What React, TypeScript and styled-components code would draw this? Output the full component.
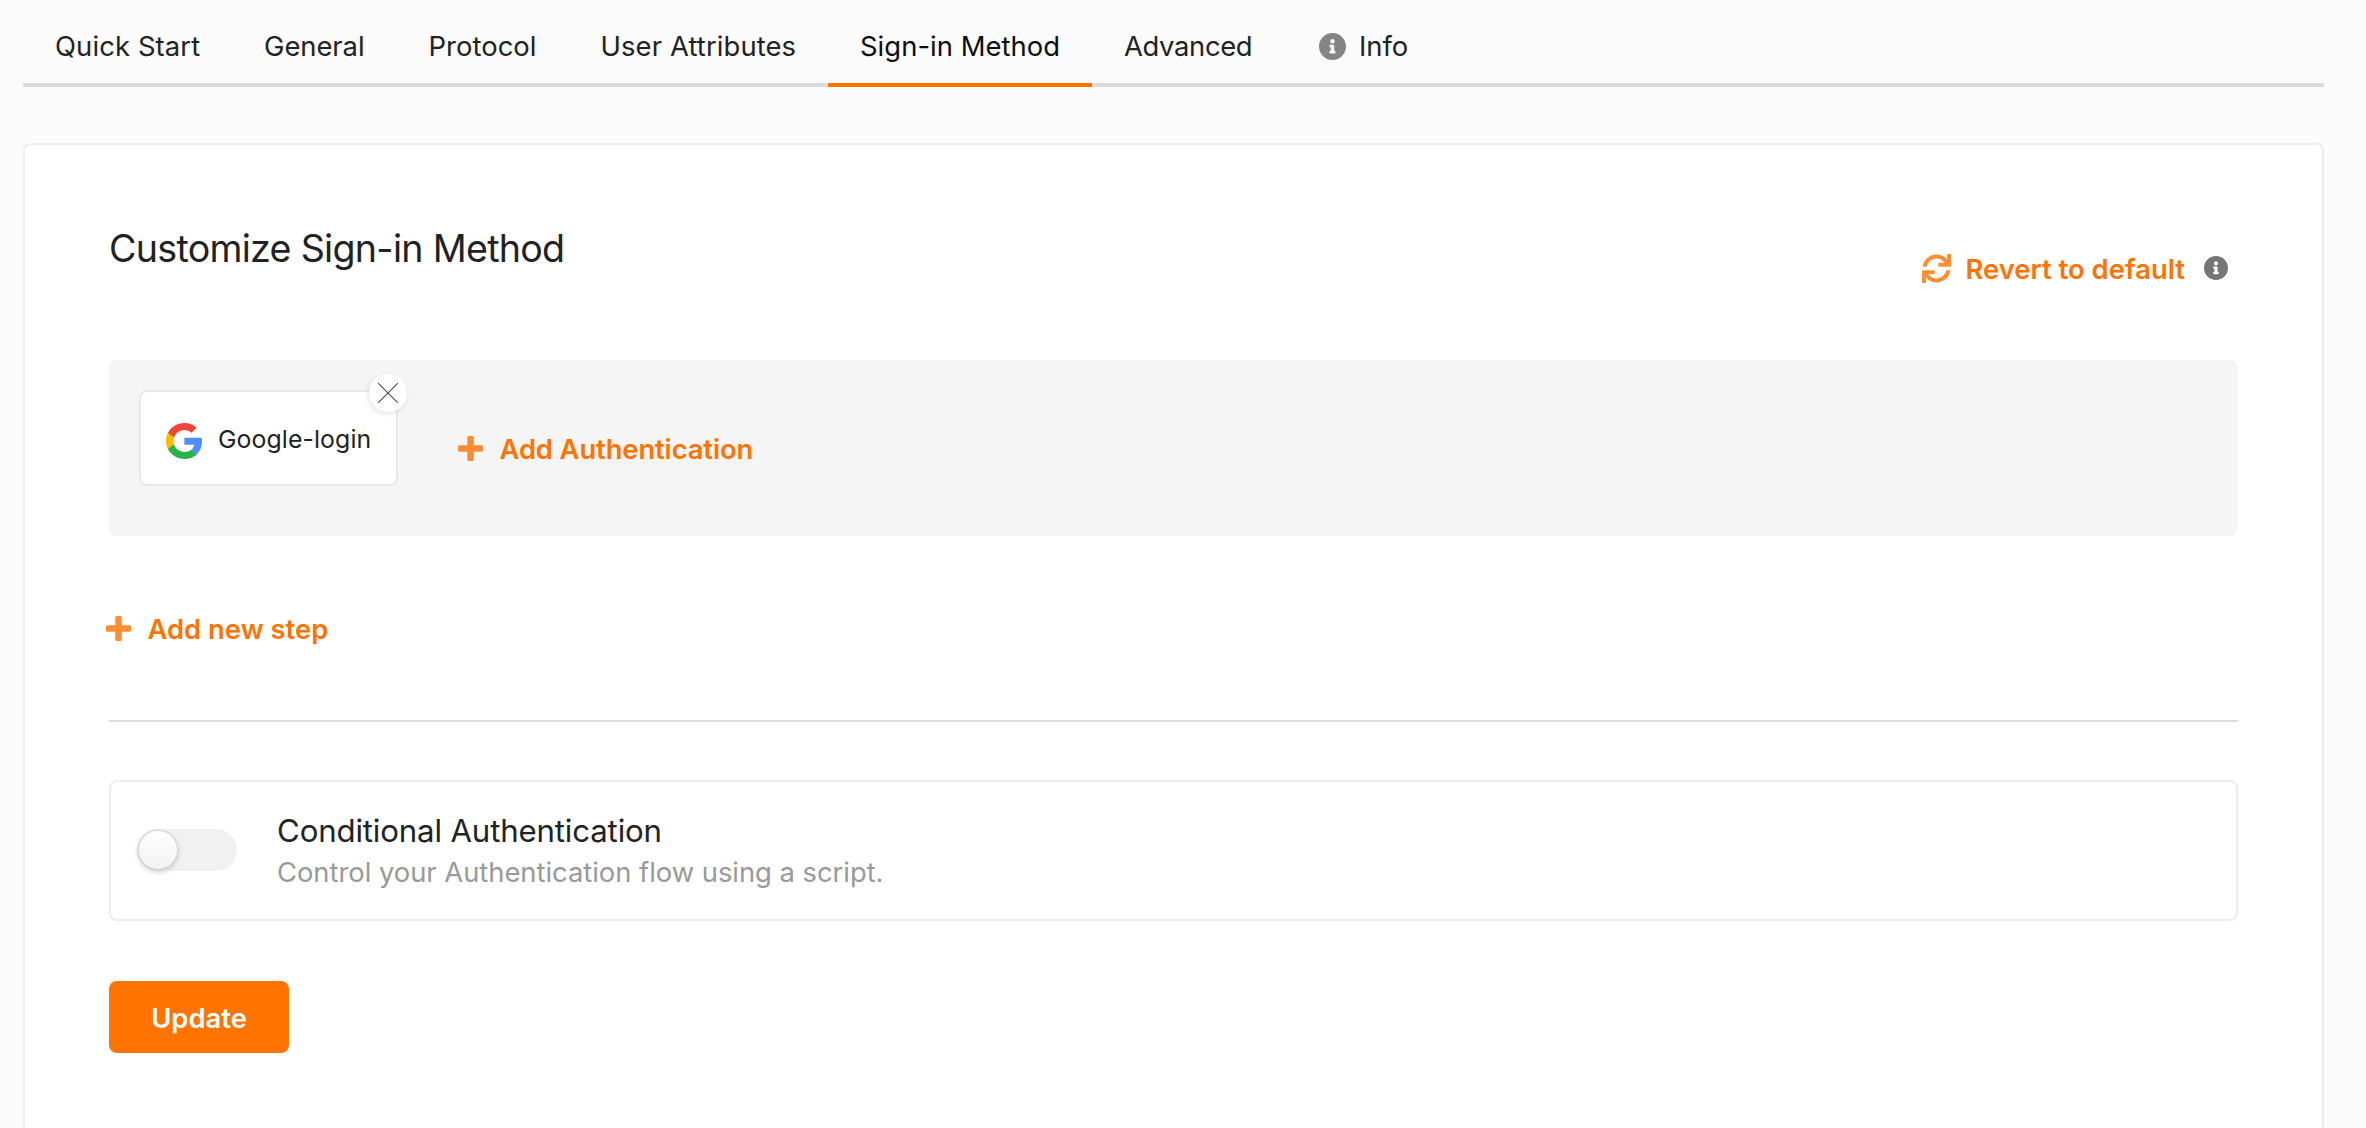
import React from "react";
import styled, { createGlobalStyle } from "styled-components";

const Global = createGlobalStyle`
  * { box-sizing: border-box; }
  body { margin: 0; background: #fbfbfb; font-family: Inter, "Liberation Sans", sans-serif; color: #212223; }
  button { font: inherit; border: 0; background: none; padding: 0; margin: 0; }
`;

const Page = styled.div`
  height: 1128px;
  padding: 0 42px 0 23px;
  display: flex;
  flex-direction: column;
  overflow: hidden;
`;

const Tabs = styled.nav`
  display: flex;
  height: 87px;
  flex: none;
  border-bottom: 4px solid #dbdbdb;
`;

const Tab = styled.a<{ $w: number; $ls: number; $active?: boolean }>`
  display: flex;
  align-items: center;
  width: ${(p) => p.$w}px;
  height: 87px;
  padding: 9px 0 0 32px;
  gap: 13px;
  white-space: nowrap;
  font-size: 27.4px;
  letter-spacing: ${(p) => p.$ls}px;
  color: ${(p) => (p.$active ? "#0c0c0d" : "#212223")};
  border-bottom: 4px solid ${(p) => (p.$active ? "#ff7300" : "transparent")};
`;

const Card = styled.main`
  flex: 1;
  display: flex;
  flex-direction: column;
  align-items: stretch;
  margin-top: 56px;
  padding: 84px 84px 0;
  background: #fff;
  border: 2px solid #ededee;
  border-bottom: 0;
  border-radius: 8px 8px 0 0;
`;

const Header = styled.header`
  display: flex;
  justify-content: space-between;
  height: 131px;
`;

const Title = styled.h1`
  margin: 0;
  font-size: 37.6px;
  font-weight: 400;
  line-height: 40px;
  letter-spacing: -0.7px;
`;

const Revert = styled.div`
  display: flex;
  align-items: center;
  gap: 19px;
  height: 72px;
  margin-top: 3px;
  padding-right: 10px;
`;

const LinkButton = styled.button<{ $gap: number; $ls: number }>`
  display: flex;
  align-items: center;
  gap: ${(p) => p.$gap}px;
  height: 72px;
  white-space: nowrap;
  font-size: 27.4px;
  font-weight: 600;
  letter-spacing: ${(p) => p.$ls}px;
  color: #ff7300;
  svg { opacity: 0.8; }
`;

const Label = styled.span`
  padding-top: 2px;
`;

const Step = styled.section`
  display: flex;
  align-items: flex-start;
  height: 176px;
  padding: 30px;
  background: #f5f5f5;
  border-radius: 8px;
`;

const Authenticator = styled.div`
  position: relative;
  display: flex;
  align-items: center;
  gap: 16px;
  width: 259px;
  height: 96px;
  padding: 6px 0 0 25px;
  margin-right: 60px;
  background: #fff;
  border: 2px solid #e8e8e8;
  border-radius: 8px;
  font-size: 24.8px;
  white-space: nowrap;
`;

const AuthName = styled.span`
  letter-spacing: 0.1px;
  padding-bottom: 4px;
`;

const Remove = styled.button`
  position: absolute;
  top: -18px;
  right: -11px;
  width: 38px;
  height: 38px;
  display: flex;
  align-items: center;
  justify-content: center;
  border-radius: 50%;
  background: #fff;
  box-shadow: -1px 2px 5px rgba(34, 36, 38, 0.12);
`;

const AddAuth = styled.div`
  padding-top: 22px;
`;

const AddStep = styled.div`
  display: flex;
  margin: 56px 0 56px -3px;
`;

const Divider = styled.hr`
  width: 100%;
  height: 2px;
  margin: 0;
  border: 0;
  background: #dededf;
`;

const Conditional = styled.section`
  display: flex;
  align-items: center;
  gap: 40px;
  height: 141px;
  margin-top: 58px;
  padding-left: 26px;
  border: 2px solid #ededee;
  border-radius: 8px;
`;

const Toggle = styled.div`
  width: 100px;
  height: 42px;
  margin-bottom: 2px;
  border-radius: 21px;
  background: #f1f1f1;
`;

const Knob = styled.div`
  width: 42px;
  height: 42px;
  border-radius: 50%;
  background: linear-gradient(transparent, rgba(0, 0, 0, 0.05)) #fff;
  box-shadow: 0 2px 4px rgba(34, 36, 38, 0.15), 0 0 0 2px rgba(34, 36, 38, 0.15) inset;
`;

const Text = styled.div`
  display: flex;
  flex-direction: column;
  white-space: nowrap;
`;

const Heading = styled.div`
  font-size: 31.2px;
  line-height: 42px;
  letter-spacing: -0.15px;
`;

const Sub = styled.div`
  font-size: 27.4px;
  line-height: 40px;
  letter-spacing: -0.03px;
  color: #999;
`;

const Update = styled.button`
  width: 180px;
  height: 72px;
  margin-top: 60px;
  padding-top: 2px;
  border-radius: 8px;
  background: #ff7300;
  color: #fff;
  font-size: 27.4px;
  font-weight: 600;
`;

const InfoIcon = ({ size, color }: { size: number; color: string }) => (
  <svg width={size} height={size} viewBox="8 8 496 496" fill={color}>
    <path d="M256 8C119 8 8 119 8 256s111 248 248 248 248-111 248-248S393 8 256 8zm0 110c23.200 0 42 18.800 42 42s-18.800 42-42 42-42-18.800-42-42 18.800-42 42-42zm56 254c0 6.600-5.400 12-12 12h-88c-6.600 0-12-5.400-12-12v-24c0-6.600 5.400-12 12-12h12v-64h-12c-6.600 0-12-5.400-12-12v-24c0-6.600 5.400-12 12-12h64c6.600 0 12 5.400 12 12v100h12c6.600 0 12 5.400 12 12z" />
  </svg>
);

const PlusIcon = () => (
  <svg width="25" height="25" viewBox="0 0 25 25" fill="#ff7300">
    <path d="M10.750 0h3.500a1.500 1.500 0 0 1 1.500 1.500V9.250h7.750A1.500 1.500 0 0 1 25 10.750V14.250a1.500 1.500 0 0 1-1.500 1.500H15.750v7.750a1.500 1.500 0 0 1-1.500 1.500H10.750a1.500 1.500 0 0 1-1.500-1.500v-7.750h-7.750A1.500 1.500 0 0 1 0 14.250v-3.500A1.500 1.500 0 0 1 1.500 9.250h7.750V1.500A1.500 1.500 0 0 1 10.750 0z" />
  </svg>
);

const RefreshIcon = () => (
  <svg width="29" height="29" viewBox="0 0 512 512" fill="#ff7300">
    <path d="M440.650 12.570l4 82.770A247.160 247.160 0 0 0 255.830 8C134.730 8 33.910 94.920 12.290 209.820A12 12 0 0 0 24.090 224h49.050a12 12 0 0 0 11.670-9.260 175.910 175.910 0 0 1 317-56.940l-101.460-4.860a12 12 0 0 0-12.570 12v47.410a12 12 0 0 0 12 12H500a12 12 0 0 0 12-12V12a12 12 0 0 0-12-12h-47.370a12 12 0 0 0-11.980 12.570zM255.830 432a175.610 175.610 0 0 1-146-77.800l101.800 4.870a12 12 0 0 0 12.570-12v-47.400a12 12 0 0 0-12-12H12a12 12 0 0 0-12 12V500a12 12 0 0 0 12 12h47.350a12 12 0 0 0 12-12.600l-4.150-82.570A247.170 247.170 0 0 0 255.830 504c121.110 0 221.930-86.920 243.550-201.820a12 12 0 0 0-11.800-14.180h-49.050a12 12 0 0 0-11.670 9.260A175.860 175.860 0 0 1 255.830 432z" />
  </svg>
);

const GoogleIcon = () => (
  <svg width="36" height="36" viewBox="0 0 533.500 544.300" preserveAspectRatio="none">
    <path fill="#518ef8" d="M533.500 278.400c0-18.500-1.500-37.100-4.700-55.300H272.100v104.800h147c-6.100 33.800-25.700 63.700-54.400 82.700v68h87.700c51.500-47.400 81.100-117.400 81.100-200.200z" />
    <path fill="#28b446" d="M272.100 544.300c73.400 0 135.300-24.100 180.400-65.700l-87.700-68c-24.400 16.600-55.900 26-92.600 26-71 0-131.200-47.900-152.800-112.300H28.900v70.100c46.200 91.900 140.300 149.900 243.200 149.900z" />
    <path fill="#fbbb00" d="M119.300 324.300c-11.400-33.800-11.400-70.400 0-104.200V150H28.900c-38.600 76.900-38.600 167.500 0 244.400l90.400-70.100z" />
    <path fill="#f14336" d="M272.100 107.700c38.800-.6 76.300 14 104.400 40.800l77.700-77.700C405 24.600 339.700-.8 272.100 0 169.200 0 75.100 58 28.900 150l90.400 70.100c21.500-64.500 81.800-112.400 152.800-112.400z" />
  </svg>
);

const CloseIcon = () => (
  <svg width="20" height="20" viewBox="0 0 20 20" stroke="#4c4c4c" strokeWidth="1.100" fill="none">
    <path d="M0 0L20 20M20 0L0 20" />
  </svg>
);

export default function App() {
  return (
    <>
      <Global />
      <Page>
        <Tabs>
          <Tab $w={209} $ls={0.12}>Quick Start</Tab>
          <Tab $w={164.500} $ls={-0.05}>General</Tab>
          <Tab $w={172} $ls={0.05}>Protocol</Tab>
          <Tab $w={259.500} $ls={0.12}>User Attributes</Tab>
          <Tab $w={264} $ls={0.05} $active>Sign-in Method</Tab>
          <Tab $w={195} $ls={-0.35}>Advanced</Tab>
          <Tab $w={160} $ls={0}>
            <InfoIcon size={27} color="#848484" />
            Info
          </Tab>
        </Tabs>
        <Card>
          <Header>
            <Title>Customize Sign-in Method</Title>
            <Revert>
              <LinkButton $gap={14.500} $ls={0.03}>
                <RefreshIcon />
                <Label>Revert to default</Label>
              </LinkButton>
              <InfoIcon size={24} color="#767676" />
            </Revert>
          </Header>
          <Step>
            <Authenticator>
              <GoogleIcon />
              <AuthName>Google-login</AuthName>
              <Remove>
                <CloseIcon />
              </Remove>
            </Authenticator>
            <AddAuth>
              <LinkButton $gap={16.500} $ls={-0.12}>
                <PlusIcon />
                <Label>Add Authentication</Label>
              </LinkButton>
            </AddAuth>
          </Step>
          <AddStep>
            <LinkButton $gap={16.500} $ls={0}>
              <PlusIcon />
              <Label>Add new step</Label>
            </LinkButton>
          </AddStep>
          <Divider />
          <Conditional>
            <Toggle>
              <Knob />
            </Toggle>
            <Text>
              <Heading>Conditional Authentication</Heading>
              <Sub>Control your Authentication flow using a script.</Sub>
            </Text>
          </Conditional>
          <Update>Update</Update>
        </Card>
      </Page>
    </>
  );
}
